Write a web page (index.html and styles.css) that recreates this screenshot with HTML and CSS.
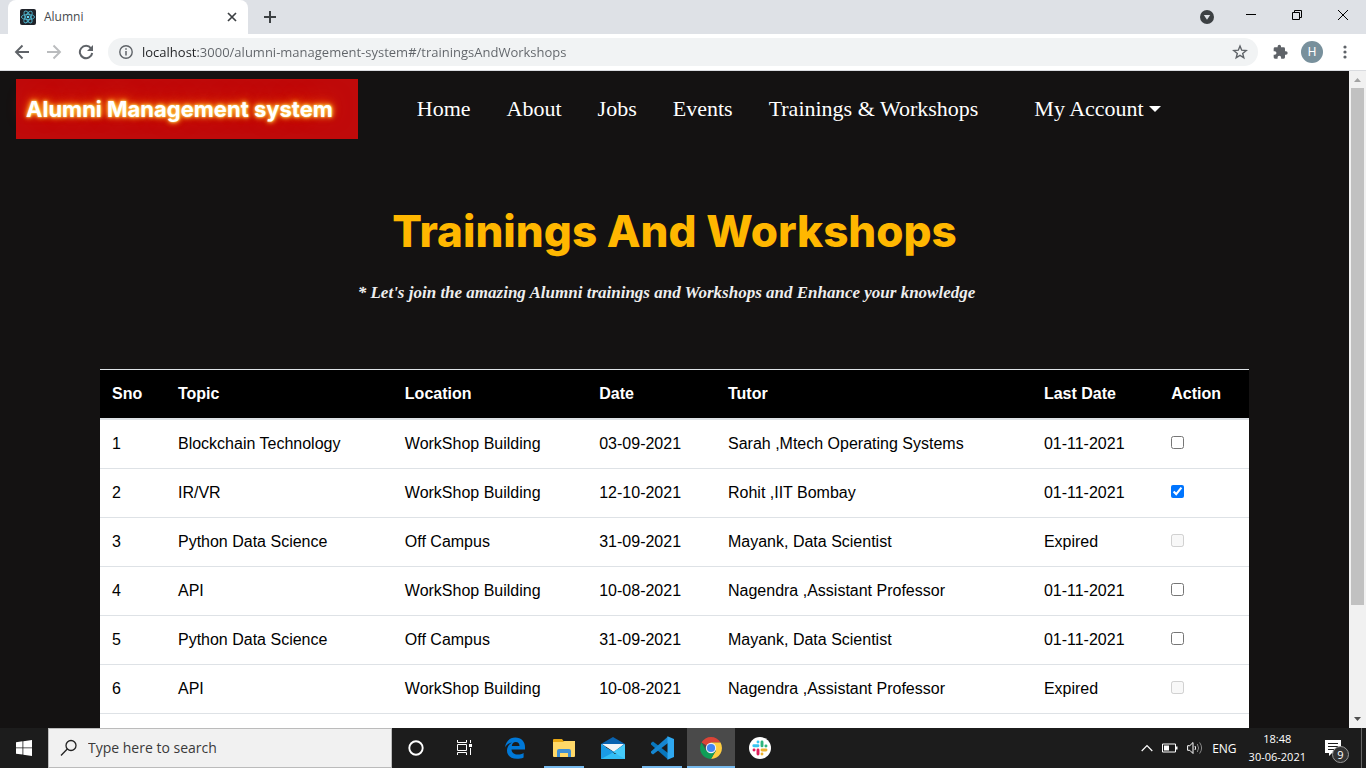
FILE: index.html
```html
<!DOCTYPE html>
<html lang="en">
<head>
<meta charset="utf-8">
<title>Alumni</title>
<link rel="stylesheet" href="styles.css">
</head>
<body>
<div class="tabstrip">
  <div class="tab">
    <svg class="favicon" viewBox="0 0 16 16"><rect width="16" height="16" rx="2" fill="#20232a"/><g fill="none" stroke="#4fb3cc" stroke-width=".9"><ellipse cx="8" cy="8" rx="6.6" ry="2.6"/><ellipse cx="8" cy="8" rx="6.6" ry="2.6" transform="rotate(60 8 8)"/><ellipse cx="8" cy="8" rx="6.6" ry="2.6" transform="rotate(120 8 8)"/></g><circle cx="8" cy="8" r="1.3" fill="#61dafb"/></svg>
    <span class="tab-title">Alumni</span>
    <button class="icon-btn tab-close" aria-label="Close tab"><svg width="16" height="16" viewBox="0 0 16 16"><path d="M4 4l8 8M12 4l-8 8" stroke="#3c4043" stroke-width="1.7"/></svg></button>
  </div>
  <button class="icon-btn new-tab" aria-label="New tab"><svg width="14" height="14" viewBox="0 0 14 14"><path d="M7 1v12M1 7h12" stroke="#3c4043" stroke-width="2"/></svg></button>
  <div class="window-controls">
    <button class="icon-btn tab-search" aria-label="Search tabs"><svg width="14" height="14" viewBox="0 0 14 14"><circle cx="7" cy="7" r="7" fill="#3c4043"/><path d="M3.8 5h6.4L7 9.8z" fill="#dee1e6"/></svg></button>
    <button class="icon-btn win" aria-label="Minimize"><svg width="10" height="10" viewBox="0 0 10 10"><path d="M0 4.500h10" stroke="#000"/></svg></button>
    <button class="icon-btn win" aria-label="Restore"><svg width="10" height="10" viewBox="0 0 10 10"><path d="M.5 2.500h7v7h-7zM2.500 2.500v-2h7v7h-2" fill="none" stroke="#000"/></svg></button>
    <button class="icon-btn win" aria-label="Close"><svg width="10" height="10" viewBox="0 0 10 10"><path d="M0 0l10 10M10 0L0 10" stroke="#000"/></svg></button>
  </div>
</div>

<div class="toolbar">
  <button class="icon-btn tool" aria-label="Back"><svg width="16" height="16" viewBox="0 0 16 16"><path d="M15 8H2M8.500 1.500L2 8l6.500 6.500" fill="none" stroke="#5f6368" stroke-width="1.900"/></svg></button>
  <button class="icon-btn tool" aria-label="Forward"><svg width="16" height="16" viewBox="0 0 16 16"><path d="M1 8h13M7.500 1.500L14 8l-6.500 6.500" fill="none" stroke="#babcbe" stroke-width="1.900"/></svg></button>
  <button class="icon-btn tool" aria-label="Reload"><svg width="16" height="16" viewBox="0 0 16 16"><path d="M13 4.300A6.200 6.200 0 1 0 14.200 9" fill="none" stroke="#5f6368" stroke-width="2"/><path d="M15 1v6H9z" fill="#5f6368"/></svg></button>
  <div class="omnibox">
    <svg width="14" height="14" viewBox="0 0 14 14"><circle cx="7" cy="7" r="6.200" fill="none" stroke="#5f6368" stroke-width="1.400"/><path d="M7 6v4.500M7 3.300v1.500" stroke="#5f6368" stroke-width="1.500"/></svg>
    <input class="url" type="text" aria-label="Address" value="localhost:3000/alumni-management-system#/trainingsAndWorkshops">
    <button class="icon-btn" aria-label="Bookmark"><svg width="16" height="16" viewBox="0 0 16 16"><path d="M8 2l1.700 4.200 4.500.3-3.500 2.900 1.100 4.400L8 11.400l-3.800 2.400 1.100-4.400-3.500-2.900 4.500-.3z" fill="none" stroke="#5f6368" stroke-width="1.400"/></svg></button>
  </div>
  <button class="icon-btn ext" aria-label="Extensions"><svg width="16" height="16" viewBox="0 0 24 24"><path fill="#5f6368" d="M21 11h-1.500V7a2 2 0 0 0-2-2h-4V3.500a2.500 2.500 0 0 0-5 0V5h-4a2 2 0 0 0-2 2v3.800H4a2.700 2.700 0 0 1 0 5.400H2.500V20a2 2 0 0 0 2 2h3.800v-1.500a2.700 2.700 0 0 1 5.400 0V22h3.800a2 2 0 0 0 2-2v-4H21a2.500 2.500 0 0 0 0-5z"/></svg></button>
  <button class="avatar" aria-label="Profile">H</button>
  <button class="icon-btn menu" aria-label="Menu"><svg width="4" height="16" viewBox="0 0 4 16"><g fill="#5f6368"><circle cx="2" cy="3" r="1.600"/><circle cx="2" cy="8" r="1.600"/><circle cx="2" cy="13" r="1.600"/></g></svg></button>
</div>

<div class="viewport">
  <div class="page">
    <header class="site-header">
      <a class="brand" href="#">Alumni Management system</a>
      <nav class="site-nav">
        <a href="#">Home</a>
        <a href="#">About</a>
        <a href="#">Jobs</a>
        <a href="#">Events</a>
        <a href="#">Trainings &amp; Workshops</a>
        <button class="account">My Account<span class="caret"></span></button>
      </nav>
    </header>
    <main class="content">
      <h1>Trainings And Workshops</h1>
      <p class="tagline">* Let's join the amazing Alumni trainings and Workshops and Enhance your knowledge</p>
      <table class="trainings">
        <thead>
          <tr><th>Sno</th><th>Topic</th><th>Location</th><th>Date</th><th>Tutor</th><th>Last Date</th><th>Action</th></tr>
        </thead>
        <tbody>
          <tr><td>1</td><td>Blockchain Technology</td><td>WorkShop Building</td><td>03-09-2021</td><td>Sarah ,Mtech Operating Systems</td><td>01-11-2021</td><td><input type="checkbox" aria-label="Join training 1"></td></tr>
          <tr><td>2</td><td>IR/VR</td><td>WorkShop Building</td><td>12-10-2021</td><td>Rohit ,IIT Bombay</td><td>01-11-2021</td><td><input type="checkbox" aria-label="Join training 2" checked></td></tr>
          <tr><td>3</td><td>Python Data Science</td><td>Off Campus</td><td>31-09-2021</td><td>Mayank, Data Scientist</td><td>Expired</td><td><input type="checkbox" aria-label="Join training 3" disabled></td></tr>
          <tr><td>4</td><td>API</td><td>WorkShop Building</td><td>10-08-2021</td><td>Nagendra ,Assistant Professor</td><td>01-11-2021</td><td><input type="checkbox" aria-label="Join training 4"></td></tr>
          <tr><td>5</td><td>Python Data Science</td><td>Off Campus</td><td>31-09-2021</td><td>Mayank, Data Scientist</td><td>01-11-2021</td><td><input type="checkbox" aria-label="Join training 5"></td></tr>
          <tr><td>6</td><td>API</td><td>WorkShop Building</td><td>10-08-2021</td><td>Nagendra ,Assistant Professor</td><td>Expired</td><td><input type="checkbox" aria-label="Join training 6" disabled></td></tr>
          <tr><td class="blank" colspan="7"></td></tr>
        </tbody>
      </table>
    </main>
  </div>
  <div class="scrollbar">
    <svg class="arrow" viewBox="0 0 17 17"><path d="M5 11h7L8.500 7z" fill="#a3a3a3"/></svg>
    <div class="track"><div class="thumb"></div></div>
    <svg class="arrow" viewBox="0 0 17 17"><path d="M5 6h7l-3.500 4z" fill="#505050"/></svg>
  </div>
</div>

<div class="taskbar">
  <button class="task start" aria-label="Start"><svg width="16" height="16" viewBox="0 0 16 16"><path fill="#fff" d="M0 2.200L6.500 1.300v6.200H0zM7.300 1.200L16 0v7.500H7.300zM0 8.300h6.500v6.300L0 13.700zM7.300 8.300H16V16l-8.700-1.200z"/></svg></button>
  <label class="search">
    <svg width="18" height="18" viewBox="0 0 18 18"><circle cx="11" cy="6.500" r="5" fill="none" stroke="#222" stroke-width="1.300"/><path d="M7.300 10L1 16.500" stroke="#222" stroke-width="1.300"/></svg>
    <input type="text" aria-label="Search" placeholder="Type here to search">
  </label>
  <div class="system">
    <button class="task" aria-label="Cortana"><svg width="18" height="18" viewBox="0 0 18 18"><circle cx="9" cy="9" r="6.700" fill="none" stroke="#fff" stroke-width="1.900"/></svg></button>
    <button class="task" aria-label="Task view"><svg width="18" height="18" viewBox="0 0 18 18"><g fill="none" stroke="#fff"><path d="M2.500 1v2.500h9V1M2.500 5.500h9v6h-9zM2.500 16v-2.500h9V16M15.500 1v3M15.500 9v7"/></g><path d="M14 5h3v3h-3z" fill="#fff"/></svg></button>
  </div>
  <div class="apps">
    <button class="task" aria-label="Edge"><svg width="22" height="22" viewBox="0 0 22 22"><path fill="#0078d7" d="M1 10.500C1.800 4.500 5.700 0.500 11.300 0.500c6 0 9.700 4.200 9.700 9.500v2.500H7.500c.2 3.500 2.900 5 6.200 5 2.200 0 4.200-.6 5.900-1.600v4.500c-2 1-4.300 1.400-6.700 1.400C6.800 21.800 3 18.500 3 13.500c0-3.500 2-6.400 5.200-8C5 6 2.500 7.800 1 10.500zM7.800 9h7.700c0-2.500-1.400-3.900-3.700-3.900S8.200 6.700 7.800 9z"/></svg></button>
    <button class="task open" aria-label="File Explorer"><svg width="22" height="20" viewBox="0 0 22 20"><path fill="#e8a714" d="M0 2q0-1 1-1h8l1.500 2H21v3H0z"/><path fill="#ffd868" d="M0 4h10l1.500-1H22v15q0 1-1 1H1q-1 0-1-1z"/><path fill="#3f8fd4" d="M4 19v-6q0-2 2-2h10q2 0 2 2v6h-3v-4H7v4z"/></svg></button>
    <button class="task" aria-label="Mail"><svg width="24" height="24" viewBox="0 0 24 24"><path fill="#0a63b0" d="M0 8l12-7 12 7v3H0z"/><path fill="#f4f6f8" d="M1 8h22l-10 8z"/><path fill="#32bdf5" d="M0 8l14 10h10v5H0z"/><path fill="#1a9be6" d="M0 9v14l13-7z"/><path fill="#45cbfa" d="M24 8L12 16l12 7z"/></svg></button>
    <button class="task open" aria-label="Visual Studio Code"><svg width="24" height="24" viewBox="0 0 24 24"><path fill="#0877bd" d="M1 7l2-1.500L18 17v6.500L1 8.500z"/><path fill="#1686d0" d="M1 17l2 1.500L18 7V.5L1 15.500z"/><path fill="#2fa8f0" d="M17.500.3L24 3v18l-6.500 2.700z"/></svg></button>
    <button class="task open active" aria-label="Google Chrome"><svg width="22" height="22" viewBox="0 0 22 22"><path fill="#db4437" d="M11 11L1.500 5.500A11 11 0 0 1 20.500 5.500H11z"/><path fill="#ffcd40" d="M11 5.500h9.500A11 11 0 0 1 11 22l4.800-8.200z"/><path fill="#0f9d58" d="M1.500 5.500A11 11 0 0 0 11 22l4.800-8.200L6.200 13.700z"/><circle cx="11" cy="11" r="5.200" fill="#f1f1f1"/><circle cx="11" cy="11" r="4.100" fill="#4285f4"/></svg></button>
    <button class="task" aria-label="Slack"><svg width="22" height="22" viewBox="0 0 22 22"><circle cx="11" cy="11" r="11" fill="#fff"/><g fill="none" stroke-width="2.900" stroke-linecap="round"><path d="M9 5v.1M9 8.800H4.800" stroke="#36c5f0"/><path d="M13 4.900v4M16.900 9h.1" stroke="#2eb67d"/><path d="M13 17v-.1M13 13h4" stroke="#ecb22e"/><path d="M9 17v-4M5.100 13H5" stroke="#e01e5a"/></g></svg></button>
  </div>
  <div class="tray">
    <svg width="12" height="8" viewBox="0 0 12 8"><path d="M.7 7L6 1.500 11.300 7" fill="none" stroke="#fff" stroke-width="1.200"/></svg>
    <svg width="16" height="10" viewBox="0 0 16 10"><path d="M.5 1h13v8H.5z" fill="none" stroke="#fff"/><path d="M2 2.500h5v5H2zM14 3.500h1.500v3H14z" fill="#fff"/></svg>
    <svg width="16" height="14" viewBox="0 0 16 14"><path d="M.6 4.700h2.200L6 1.500v11L2.800 9.300H.6zM8 5q1.200 2 0 4" fill="none" stroke="#fff"/><path d="M10.300 3q2.600 4 0 8M12.600 1.500q4 5.500 0 11" fill="none" stroke="#888"/></svg>
    <span class="lang">ENG</span>
    <div class="clock"><span>18:48</span><span>30-06-2021</span></div>
    <button class="task notify" aria-label="Notifications"><svg width="16" height="16" viewBox="0 0 16 16"><path fill="#fff" d="M0 0h16v13H7l-3 3v-3H0z"/><path d="M3 3.500h10M3 6.500h10M3 9.500h6" stroke="#1c1c1c"/></svg><span class="badge">9</span></button>
    <div class="peek"></div>
  </div>
</div>
</body>
</html>
```
FILE: styles.css
```css
* { box-sizing: border-box; }
body {
  margin: 0;
  height: 100vh;
  display: flex;
  flex-direction: column;
  overflow: hidden;
  font-family: "Liberation Sans", Arial, sans-serif;
}
button { font: inherit; border: 0; padding: 0; background: none; color: inherit; }
a { color: inherit; text-decoration: none; }
svg { flex: none; display: block; }
.icon-btn { display: flex; align-items: center; justify-content: center; }

/* Browser frame */
.tabstrip { flex: none; display: flex; height: 34px; padding-left: 8px; background: #dee1e6; }
.tab {
  width: 240px;
  display: flex;
  align-items: center;
  gap: 8px;
  padding: 0 8px 0 12px;
  background: #fff;
  border-radius: 8px 8px 0 0;
}
.favicon { width: 16px; height: 16px; }
.tab-title { flex: 1; font: 12px/16px "Open Sans", sans-serif; color: #45494d; }
.new-tab { width: 44px; }
.window-controls { margin-left: auto; display: flex; }
.tab-search { width: 42px; }
.win { width: 46px; height: 29px; }

.toolbar {
  flex: none;
  display: flex;
  align-items: center;
  height: 37px;
  padding-left: 6px;
  background: #fff;
  border-bottom: 1px solid #dadce0;
}
.tool { width: 32px; }
.omnibox {
  flex: 1;
  display: flex;
  align-items: center;
  gap: 9px;
  height: 28px;
  margin-left: 6px;
  padding: 0 10px 0 11px;
  border-radius: 14px;
  background: #f1f3f4;
}
.url {
  flex: 1;
  border: 0;
  padding: 0;
  font: 13px/20px "Open Sans", sans-serif;
  color: transparent;
  background: linear-gradient(90deg, #202124 56px, #5f6368 56px);
  -webkit-background-clip: text;
  background-clip: text;
}
.ext { width: 43px; }
.avatar { width: 22px; height: 22px; border-radius: 50%; background: #78909c; color: #fff; font: 12px/22px Roboto, sans-serif; }
.menu { width: 43px; }

/* Scrolled page */
.viewport { flex: 1; min-height: 0; display: flex; }
.page { flex: 1; overflow: hidden; background: #141212; color: #fff; }
.scrollbar { width: 17px; display: flex; flex-direction: column; background: #f1f1f1; }
.arrow { width: 17px; height: 17px; }
.track { flex: 1; padding: 0 2px; }
.thumb { height: 83%; background: #c1c1c1; }

.site-header { display: flex; align-items: center; padding: 8px 16px; }
.brand {
  padding: 0 25px 0 10px;
  background: #bf0a0a;
  font: 700 22px/60px Inter, sans-serif;
  white-space: nowrap;
  text-shadow: 0 0 2px #ffe680, 0 0 4px #ffc933, 0 0 6px #ff9a1f, 0 -2px 10px #f60, 0 -4px 20px #e32a0a;
}
.site-nav { display: flex; gap: 36px; margin-left: 59px; font: 22px/30px "Liberation Serif", serif; white-space: nowrap; }
.account { display: flex; align-items: center; gap: 5px; margin-left: 20px; }
.caret { border: 6px solid transparent; border-top-color: #fff; border-bottom: 0; }

.content { padding: 56px 100px 0; }
h1 { margin: 0; text-align: center; font: 800 44px/56px Inter, sans-serif; color: #ffb700; }
.tagline {
  margin: 22px 16px 64px 0;
  text-align: center;
  font: italic bold 17px/24px "Liberation Serif", serif;
  color: #eee;
}
.trainings { width: 100%; border-collapse: collapse; background: #fff; color: #000; font-size: 16px; line-height: 24px; text-align: left; }
.trainings th, .trainings td { padding: 12px; border-top: 1px solid #dee2e6; vertical-align: top; }
.trainings thead { background: #000; color: #fff; }
.trainings thead th { border-bottom: 2px solid #dee2e6; }
.trainings .blank { height: 49px; }
.trainings input { display: block; width: 13px; height: 13px; margin: 4px 0 0; }

/* Taskbar */
.taskbar { flex: none; display: flex; height: 40px; background: #1c1c1c; color: #fff; font-family: "Open Sans", sans-serif; }
.task { position: relative; display: flex; align-items: center; justify-content: center; width: 48px; height: 40px; }
.search { display: flex; align-items: center; gap: 10px; width: 344px; padding: 0 11px; background: #f1f1f1; border: 1px solid #bbb; }
.search input { flex: 1; min-width: 0; border: 0; padding: 0; background: none; font: 14px/20px "Open Sans", sans-serif; color: #2b2b2b; }
.search input::placeholder { color: #3a3a3a; opacity: 1; }
.system { display: flex; }
.apps { display: flex; gap: 1px; margin-left: 3px; }
.open::after { content: ""; position: absolute; left: 4px; right: 4px; bottom: 0; height: 2px; background: #76b9ed; }
.active { background: #4a4a4a; }
.active::after { left: 0; right: 0; }
.tray { margin-left: auto; display: flex; align-items: center; gap: 9px; font-size: 12px; }
.clock { display: flex; flex-direction: column; align-items: center; margin-left: 3px; line-height: 18px; font-size: 11px; }
.notify { margin-left: -6px; }
.badge {
  position: absolute;
  left: 23px;
  top: 18px;
  width: 17px;
  height: 17px;
  border: 1px solid #999;
  border-radius: 50%;
  background: #333;
  font-size: 11px;
  line-height: 15px;
  text-align: center;
}
.peek { width: 5px; height: 40px; margin-left: -5px; border-left: 1px solid #666; }
```
